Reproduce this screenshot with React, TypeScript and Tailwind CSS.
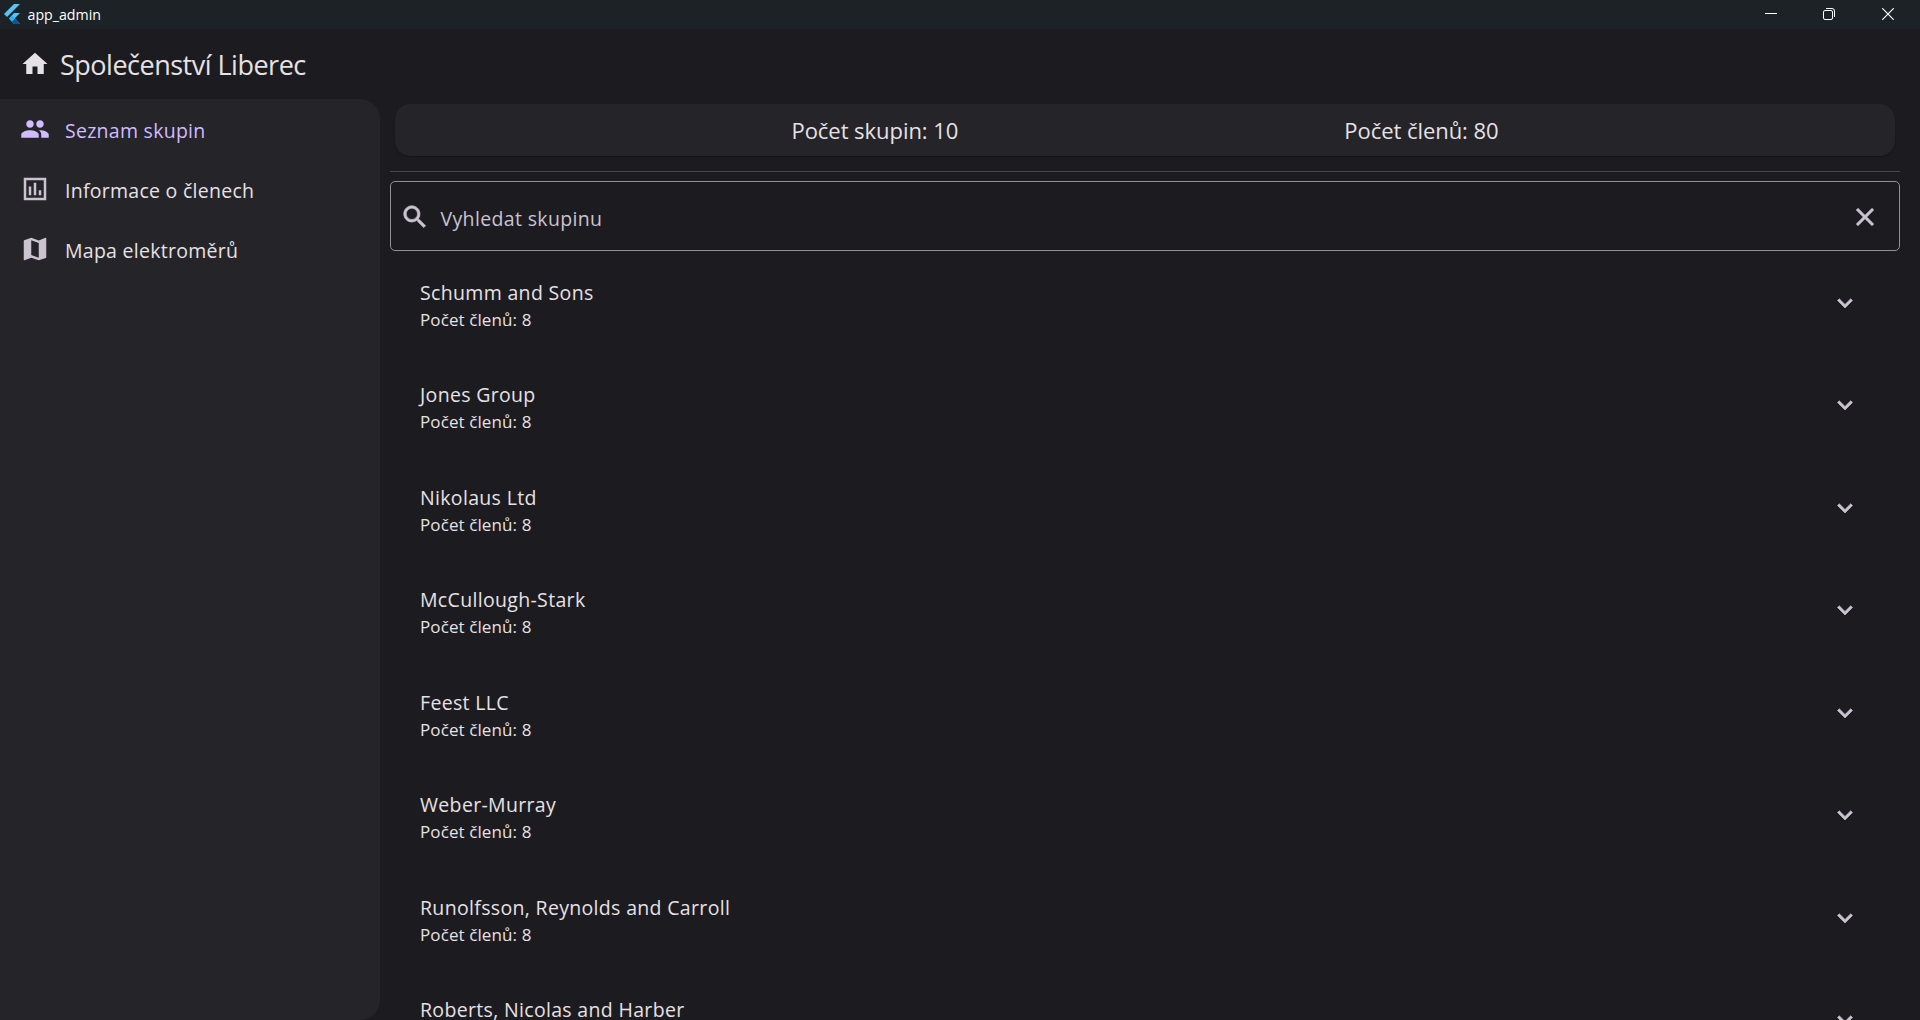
import React from "react";

const groups = [
  "Schumm and Sons",
  "Jones Group",
  "Nikolaus Ltd",
  "McCullough-Stark",
  "Feest LLC",
  "Weber-Murray",
  "Runolfsson, Reynolds and Carroll",
  "Roberts, Nicolas and Harber",
];

const icons = {
  home: "M10 20v-6h4v6h5v-8h3L12 3 2 12h3v8z",
  people:
    "M16 11c1.66 0 2.99-1.34 2.99-3S17.66 5 16 5s-3 1.34-3 3 1.34 3 3 3zm-8 0c1.66 0 2.99-1.34 2.99-3S9.66 5 8 5 5 6.34 5 8s1.34 3 3 3zm0 2c-2.33 0-7 1.17-7 3.5V19h14v-2.5c0-2.33-4.67-3.5-7-3.5zm8 0c-.29 0-.62.02-.97.05 1.16.84 1.97 1.97 1.97 3.45V19h6v-2.5c0-2.33-4.67-3.5-7-3.5z",
  chart:
    "M3 3v18h18V3H3zm2 2h14v14H5V5zm2 5h2v7H7v-7zm4-3h2v10h-2V7zm4 6h2v4h-2v-4z",
  map: "M20.5 3l-.16.03L15 5.1 9 3 3.36 4.9c-.21.07-.36.25-.36.48V20.5c0 .28.22.5.5.5l.16-.03L9 18.9l6 2.1 5.64-1.9c.21-.07.36-.25.36-.48V3.5c0-.28-.22-.5-.5-.5zM15 19l-6-2.11V5l6 2.11V19z",
  search:
    "M15.5 14h-.79l-.28-.27C15.41 12.59 16 11.11 16 9.5 16 5.91 13.09 3 9.5 3S3 5.91 3 9.5 5.91 16 9.5 16c1.61 0 3.09-.59 4.23-1.57l.27.28v.79l5 4.99L20.49 19l-4.99-5zm-6 0C7.01 14 5 11.99 5 9.5S7.01 5 9.5 5 14 7.01 14 9.5 11.99 14 9.5 14z",
  clear:
    "M19 6.41L17.59 5 12 10.59 6.41 5 5 6.41 10.59 12 5 17.59 6.41 19 12 13.41 17.59 19 19 17.59 13.41 12z",
  expand: "M16.59 8.59L12 13.17 7.41 8.59 6 10l6 6 6-6z",
};

function Icon({ name, className = "" }: { name: keyof typeof icons; className?: string }) {
  return (
    <svg viewBox="0 0 24 24" className={`size-[30px] shrink-0 fill-current ${className}`}>
      <path fillRule={name === "chart" ? "evenodd" : "nonzero"} d={icons[name]} />
    </svg>
  );
}

function FlutterLogo() {
  return (
    <svg viewBox="0 0 16 20" className="mt-[4px] ml-[4px] h-5 w-4 shrink-0">
      <path d="M10 0h6L3 13 0 10z" fill="#54c5f8" />
      <path d="M10 9h6l-5.2 5.2L16 20h-6l-5-5.5z" fill="#54c5f8" />
      <path d="M5 14.5l3-3 3 3-3 3z" fill="#29b6f6" />
      <path d="M8 17.5l3-3 5 5.5h-6z" fill="#01579b" />
    </svg>
  );
}

function TitleBar() {
  return (
    <header className="flex h-[29px] shrink-0 items-start bg-[#1c2226] text-white">
      <FlutterLogo />
      <span className="mt-[4px] ml-[7.5px] text-[14.2px] leading-[21px]">app_admin</span>
      <div className="mt-[8px] mr-[26px] ml-auto flex">
        <svg viewBox="0 0 12 12" className="size-3 stroke-current">
          <path d="M0 5.5h12" />
        </svg>
        <svg viewBox="0 0 12 12" className="ml-[46px] size-3 fill-none stroke-current">
          <rect x=".5" y="2.5" width="9" height="9" rx="1.5" />
          <path d="M3 .5h6a2.5 2.5 0 0 1 2.5 2.5v6" />
        </svg>
        <svg viewBox="0 0 12 12" className="ml-[47px] size-3 stroke-current">
          <path d="M.3.3l11.4 11.4M11.7.3L.3 11.7" strokeWidth="1.2" />
        </svg>
      </div>
    </header>
  );
}

function NavItem({ icon, label, active }: { icon: keyof typeof icons; label: string; active?: boolean }) {
  return (
    <a className={`flex h-[60px] items-center pl-5 ${active ? "text-[#d0bcff]" : "text-[#cac4d0]"}`}>
      <Icon name={icon} />
      <span
        className={`ml-[15px] pt-[3px] text-[19.5px] leading-[27px] tracking-[0.27px] ${active ? "" : "text-[#e6e1e5]"}`}
      >
        {label}
      </span>
    </a>
  );
}

export default function App() {
  return (
    <div
      className="flex h-[1020px] w-full flex-col overflow-hidden bg-[#1c1b1f] text-[#e6e1e5]"
      style={{ fontFamily: '"Open Sans", "Noto Sans", sans-serif' }}
    >
      <TitleBar />
      <div className="flex h-[70px] shrink-0 items-start pt-[19.5px] pl-5">
        <Icon name="home" />
        <h1 className="mt-[-2px] ml-[10px] text-[27px] leading-[36px] tracking-[-0.5px]">Společenství Liberec</h1>
      </div>
      <div className="flex min-h-0 flex-1">
        <nav className="w-[380px] shrink-0 rounded-r-[20px] bg-[#252429]">
          <NavItem icon="people" label="Seznam skupin" active />
          <NavItem icon="chart" label="Informace o členech" />
          <NavItem icon="map" label="Mapa elektroměrů" />
        </nav>
        <main className="min-w-0 flex-1 overflow-hidden pt-[5px] pr-5 pl-2.5">
          <div className="mx-[5px] flex h-[52px] justify-center gap-[386px] rounded-[15px] bg-[#252429] pt-[11px] text-[22px] leading-[30px] tracking-[-0.05px] shadow-[0_1px_2px_rgba(0,0,0,0.3)]">
            <span>Počet skupin: 10</span>
            <span>Počet členů: 80</span>
          </div>
          <hr className="mt-[15px] border-[#49454f]" />
          <div className="mt-[9px] flex h-[70px] items-center rounded-[5px] border border-[#938f99] pr-[19.5px] pl-[8.5px] text-[#cac4d0]">
            <Icon name="search" className="mt-[1.5px] stroke-current stroke-[0.5]" />
            <span className="mt-[4px] ml-[11px] flex-1 text-[19.5px] leading-[27px] tracking-[0.35px]">
              Vyhledat skupinu
            </span>
            <Icon name="clear" className="mt-[1.5px] stroke-current stroke-[0.5]" />
          </div>
          <ul className="mt-[4px]">
            {groups.map((name) => (
              <li key={name} className="flex h-[102.46px] items-start justify-between pr-[40px] pl-[30px]">
                <div className="pt-[24px]">
                  <div className="text-[19.5px] leading-[27px] tracking-[0.33px]">{name}</div>
                  <div className="text-[17px] leading-[27px] tracking-[0.1px]">Počet členů: 8</div>
                </div>
                <Icon name="expand" className="mt-[33px] stroke-current stroke-[0.5] text-[#cac4d0]" />
              </li>
            ))}
          </ul>
        </main>
      </div>
    </div>
  );
}
